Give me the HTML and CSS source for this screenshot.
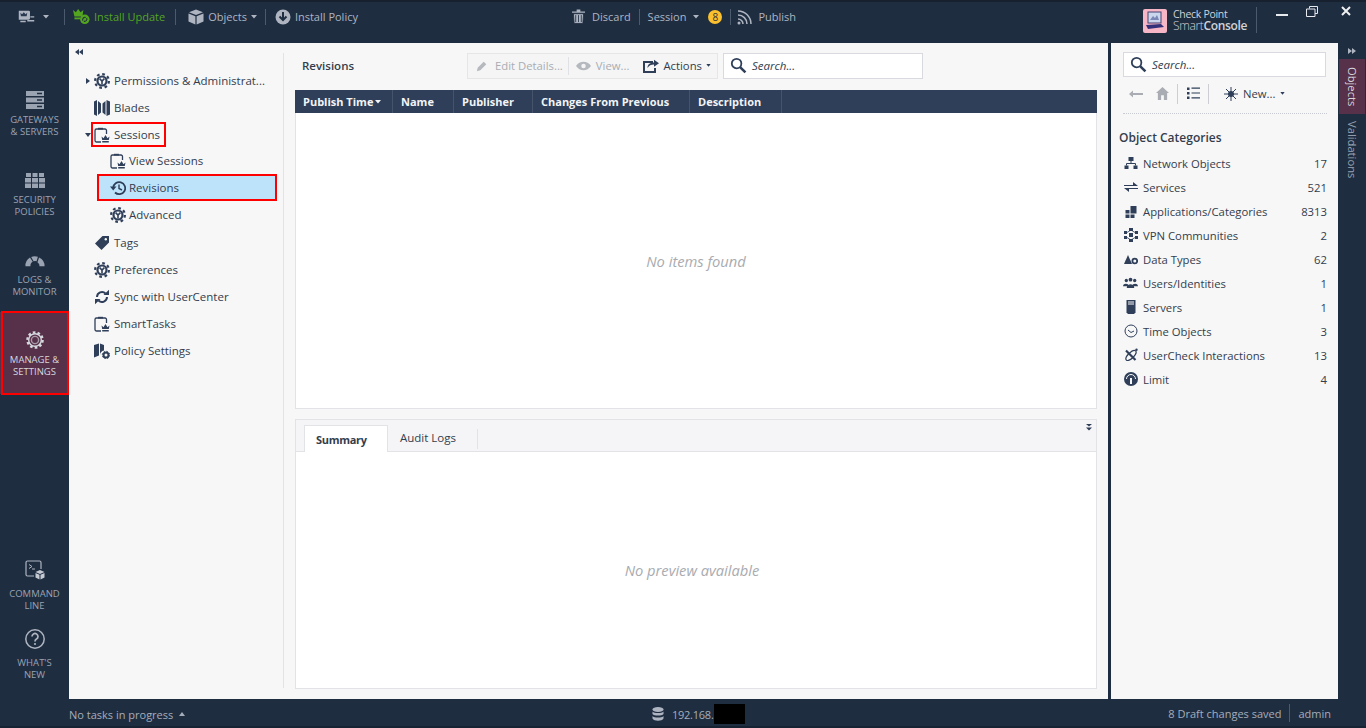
FILE: index.html
```html
<!DOCTYPE html>
<html lang="en">
<head>
<meta charset="utf-8">
<title>SmartConsole</title>
<link rel="stylesheet" href="styles.css">
</head>
<body>
<svg class="defs" width="0" height="0" aria-hidden="true">
  <symbol id="gear" viewBox="0 0 16 16">
    <circle cx="8" cy="8" r="6.9" fill="none" stroke="currentColor" stroke-width="2.2" stroke-dasharray="2.7 2.72"/>
    <circle cx="8" cy="8" r="5.6" fill="currentColor"/>
    <circle cx="8" cy="8" r="3.4" fill="#f7f7f7"/>
    <path d="M5.6 5.6 8 8l2.4-2.4M8 8v3.4" stroke="currentColor" stroke-width="1.6" fill="none"/>
  </symbol>
  <symbol id="crownboard" viewBox="0 0 16 16">
    <path d="M7 15H2.500A1.500 1.500 0 0 1 1 13.500v-10A1.500 1.500 0 0 1 2.500 2H11a1.500 1.500 0 0 1 1.500 1.500V7" fill="none" stroke="currentColor" stroke-width="1.300"/>
    <path d="M4 2.500V.8h5v1.700z" fill="currentColor"/>
    <path d="M7.500 9.500l2 1.700L11.500 8l2 3.200 2-1.700-.7 3.500H8.200zM8.200 14h6.600v1.500H8.200z" fill="currentColor"/>
  </symbol>
  <symbol id="search" viewBox="0 0 16 16">
    <circle cx="6.200" cy="6.200" r="4.500" fill="none" stroke="currentColor" stroke-width="1.700"/>
    <path d="M9.500 9.500l5 5" stroke="currentColor" stroke-width="2.400"/>
  </symbol>
  <symbol id="caret" viewBox="0 0 6 4"><path d="M0 0h6L3 3.500z" fill="currentColor"/></symbol>
</svg>

<div class="app">
  <header class="topbar">
    <div class="top-left">
      <span class="tool menu-tool">
        <svg class="ico-menu" viewBox="0 0 22 18"><path d="M1 1h13a1.500 1.500 0 0 1 1.500 1.500V11a1.500 1.500 0 0 1-1.500 1.500H1z" fill="#aeb5c1"/><path d="M3 3.500l2.300 1.800L7.500 2.800l2.300 2.500 2.200-1.800-.8 4.500H3.800z" fill="#2a3850"/><path d="M16 8h5v1.800h-5zM12 13h9v1.800h-9zM3 14h7v1.800H3z" fill="#aeb5c1"/></svg>
        <svg class="caret-sm" viewBox="0 0 6 4"><use href="#caret"/></svg>
      </span>
      <i class="sep sep-a"></i>
      <span class="tool update">
        <svg class="ico-update" viewBox="0 0 18 18"><path d="M0 2l3 2.500L5.500 1 8 4.500 11 2l-1 7H1.500z" fill="#53a51f"/><path d="M1.500 10H8v2H1.500z" fill="#53a51f"/><circle cx="12.500" cy="12" r="5" fill="#53a51f"/><path d="M10.500 13.500a2.500 2.500 0 0 1 3-3.500M14.500 10.500a2.500 2.500 0 0 1-3 3.500" stroke="#1f2d41" stroke-width="1.100" fill="none"/></svg>
        Install Update
      </span>
      <i class="sep sep-b"></i>
      <span class="tool objects-tool">
        <svg class="ico-top" viewBox="0 0 16 16"><path d="M8 .5l7 2.800L8 6 1 3.300z" fill="#aeb5c1"/><path d="M.5 4.500L7.400 7.200V15.500L.5 12.500zM15.500 4.500L8.600 7.200V15.500l6.900-3z" fill="#aeb5c1"/></svg>
        Objects
        <svg class="caret-sm" viewBox="0 0 6 4"><use href="#caret"/></svg>
      </span>
      <i class="sep sep-c"></i>
      <span class="tool objects-tool">
        <svg class="ico-top" viewBox="0 0 16 16"><circle cx="8" cy="8" r="7.500" fill="#aeb5c1"/><path d="M8 3v8M4.500 7.500L8 11l3.500-3.500" stroke="#1f2d41" stroke-width="2" fill="none"/></svg>
        Install Policy
      </span>
    </div>
    <div class="top-center">
      <span class="tool discard">
        <svg class="ico-trash" viewBox="0 0 14 16"><path d="M0 2.500h14v1.500H0zM5 .5h4v2H5z" fill="#aeb5c1"/><path d="M1.500 5h11l-.8 10.500H2.300zM4 6.500v7.500M7 6.500v7.500M10 6.500v7.500" fill="#aeb5c1" stroke="#1f2d41" stroke-width=".9"/></svg>
        Discard
      </span>
      <i class="sep sep-d"></i>
      <span class="tool session">Session
        <svg class="caret-sm" viewBox="0 0 6 4"><use href="#caret"/></svg>
        <b class="badge">8</b>
      </span>
      <i class="sep sep-e"></i>
      <span class="tool publish">
        <svg class="ico-rss" viewBox="0 0 16 16"><path d="M1 2a13 13 0 0 1 13 13M1 6a9 9 0 0 1 9 9M1 10a5 5 0 0 1 5 5" fill="none" stroke="#aeb5c1" stroke-width="1.500"/><circle cx="2" cy="14" r="1.500" fill="#aeb5c1"/></svg>
        Publish
      </span>
    </div>
    <div class="top-right">
      <div class="logo">
        <svg class="logo-ico" viewBox="0 0 24 24"><rect width="24" height="24" rx="2" fill="#f7b6c6"/><rect x="5" y="3" width="13" height="11" fill="#c9d6ec" stroke="#46406f"/><path d="M7 11l3-4 2 2 2-3 2 5z" fill="#7a86b5"/><path d="M3 16l15-1 3 3-16 2z" fill="#33307a"/></svg>
        <div class="logo-text">
          <span class="logo-l1">Check Point</span>
          <span class="logo-l2">Smart<b>Console</b></span>
        </div>
      </div>
      <i class="logo-sep"></i>
      <div class="winctl">
        <svg class="win-min" viewBox="0 0 12 2"><path d="M0 0h12v2H0z" fill="#e6e9ee"/></svg>
        <svg class="win-max" viewBox="0 0 12 11"><path d="M3.500 2.500V.5h8v7h-2.500M.5 3h8.500v7.500H.5z" fill="none" stroke="#e6e9ee"/></svg>
        <svg class="win-close" viewBox="0 0 10 10"><path d="M1 1l8 8M9 1l-8 8" stroke="#eef0f3" stroke-width="2"/></svg>
      </div>
    </div>
  </header>

  <div class="middle">
    <nav class="sidenav">
      <div class="nav-main">
        <a class="nav-item">
          <svg class="nav-ico" viewBox="0 0 20 20"><path d="M1 1h18v5H1zM1 7.500h18v5H1zM1 14h18v5H1z" fill="#9aa3b2"/><path d="M12 3.500h5M12 10h5M12 16.500h5" stroke="#1f2d41" stroke-width="1.400"/></svg>
          <span>GATEWAYS<br>&amp; SERVERS</span>
        </a>
        <a class="nav-item">
          <svg class="nav-ico" viewBox="0 0 20 18"><path d="M1 2h5v4H1zM7.500 2h5v4h-5zM14 2h5v4h-5zM0 7h6v4.500H0zM7 7h6v4.500H7zM14 7h6v4.500h-6zM0 12.500h6V17H0zM7 12.500h6V17H7zM14 12.500h6V17h-6z" fill="#9aa3b2"/></svg>
          <span>SECURITY<br>POLICIES</span>
        </a>
        <a class="nav-item">
          <svg class="nav-ico" viewBox="0 0 22 14"><path d="M.5 14A10.500 10.500 0 0 1 5.500 4.300L8.500 9A5 5 0 0 0 6 14zM6.800 3.600a10.500 10.500 0 0 1 7.400-.1L12.700 8.400a5 5 0 0 0-3.300.1zM15.500 4.200A10.500 10.500 0 0 1 21.500 14H16a5 5 0 0 0-2.300-4.600z" fill="#9aa3b2"/></svg>
          <span>LOGS &amp;<br>MONITOR</span>
        </a>
        <a class="nav-item active">
          <svg class="nav-ico" viewBox="0 0 20 20"><circle cx="10" cy="10" r="7.600" fill="none" stroke="#d5d8de" stroke-width="2.400" stroke-dasharray="2.600 2.170"/><circle cx="10" cy="10" r="6.300" fill="none" stroke="#d5d8de" stroke-width="1.400"/><circle cx="10" cy="10" r="3.600" fill="none" stroke="#a99aa8" stroke-width="1.400"/></svg>
          <span>MANAGE &amp;<br>SETTINGS</span>
        </a>
      </div>
      <div class="nav-bottom">
        <a class="nav-item small">
          <svg class="nav-ico-cl" viewBox="0 0 20 20"><path d="M9 16H2.500A1.500 1.500 0 0 1 1 14.500v-12A1.500 1.500 0 0 1 2.500 1h12A1.500 1.500 0 0 1 16 2.500V9" fill="none" stroke="#aeb5c1" stroke-width="1.200"/><path d="M4 4.500L7 6.500 4 8.500M7 9h3" stroke="#aeb5c1" stroke-width="1" fill="none"/><path d="M15 10l4.500 2-4.500 2-4.500-2zM10.500 13l4 1.800V19.500l-4-2zM19.500 13l-4 1.800V19.500l4-2z" fill="#c4c9d2"/></svg>
          <span>COMMAND<br>LINE</span>
        </a>
        <a class="nav-item small">
          <svg class="nav-ico-cl" viewBox="0 0 20 20"><circle cx="10" cy="10" r="9.200" fill="none" stroke="#aeb5c1" stroke-width="1.500"/><path d="M7 7.500a3 3 0 1 1 4.500 2.600C10.500 10.700 10 11.300 10 12.500" fill="none" stroke="#aeb5c1" stroke-width="1.700"/><circle cx="10" cy="15" r="1.100" fill="#aeb5c1"/></svg>
          <span>WHAT'S<br>NEW</span>
        </a>
      </div>
      <i class="mark mark-nav"></i>
    </nav>

    <section class="tree-pane">
      <div class="collapse-l"><svg viewBox="0 0 8 6"><path d="M4 0v6L0 3zM8 0v6L4 3z" fill="#2f3f59"/></svg></div>
      <ul class="tree">
        <li class="row"><svg class="twist" viewBox="0 0 4 6"><path d="M0 0l4 3-4 3z"/></svg><svg class="ti"><use href="#gear"/></svg>Permissions &amp; Administrat...</li>
        <li class="row"><svg class="ti" viewBox="0 0 16 16"><path d="M0 1.500L3 0v16l-3-1.500zM4 1l3 2.500v9L4 15zM8.500 3.500L11.500 1v14l-3-2.500zM12.500 0L16 1.500v13L12.500 16z" fill="currentColor"/></svg>Blades</li>
        <li class="row open"><svg class="twist" viewBox="0 0 6 4"><path d="M0 0h6L3 4z"/></svg><svg class="ti"><use href="#crownboard"/></svg>Sessions<i class="mark mark-sessions"></i></li>
        <li class="row sub short"><svg class="ti"><use href="#crownboard"/></svg>View Sessions</li>
        <li class="row sub selected"><svg class="ti" viewBox="0 0 16 16"><path d="M3.200 8A6 6 0 1 1 5 12.500" fill="none" stroke="currentColor" stroke-width="1.800"/><path d="M0 6.500h6.500L3.200 10.500z" fill="currentColor"/><path d="M9 4.500V8.500l3 1.500" fill="none" stroke="currentColor" stroke-width="1.400"/></svg>Revisions<i class="mark mark-revisions"></i></li>
        <li class="row sub"><svg class="ti"><use href="#gear"/></svg>Advanced</li>
        <li class="row gap1"><svg class="ti" viewBox="0 0 16 16"><path d="M8.500 1h6.500v6.500L7.500 15 1 8.500z" fill="currentColor"/><circle cx="11.800" cy="4.200" r="1.200" fill="#f7f7f7"/></svg>Tags</li>
        <li class="row"><svg class="ti"><use href="#gear"/></svg>Preferences</li>
        <li class="row"><svg class="ti" viewBox="0 0 16 16"><path d="M3 8a5 5 0 0 1 8.500-3.500M13 8a5 5 0 0 1-8.500 3.500" fill="none" stroke="currentColor" stroke-width="2"/><path d="M9.500 6H15V.8zM6.500 10H1v5.200z" fill="currentColor"/></svg>Sync with UserCenter</li>
        <li class="row"><svg class="ti"><use href="#crownboard"/></svg>SmartTasks</li>
        <li class="row"><svg class="ti" viewBox="0 0 16 16"><path d="M0 2l5-1.500v12L0 14.500zM6 .5l4 1.500v5.500a4.500 4.500 0 0 0-4 5z" fill="currentColor"/><circle cx="12" cy="12" r="2.500" fill="none" stroke="currentColor" stroke-width="2"/><circle cx="12" cy="12" r="3.700" fill="none" stroke="currentColor" stroke-width="1" stroke-dasharray="1.500 1.400"/></svg>Policy Settings</li>
      </ul>
    </section>

    <main class="content">
      <div class="content-tools">
        <strong class="content-title">Revisions</strong>
        <div class="actions">
          <span class="act dis"><svg class="act-ico" viewBox="0 0 14 14"><path d="M1 13l1-4 7-7 3 3-7 7z" fill="#b5b8bd"/></svg>Edit Details...</span>
          <i class="act-sep"></i>
          <span class="act dis view"><svg class="eye" viewBox="0 0 16 10"><path d="M0 5c4-6 12-6 16 0-4 6-12 6-16 0z" fill="#b5b8bd"/><circle cx="8" cy="5" r="2.400" fill="#f5f5f7"/></svg>View...</span>
          <span class="act on"><svg class="share" viewBox="0 0 16 14"><path d="M10 3H1v10h11V9" fill="none" stroke="#2f3f59" stroke-width="2"/><path d="M4.500 9c0-4 3-5.500 6.500-5.500V.8L16 4.300l-5 3.500V5.500c-3 0-5 1-6.500 3.500z" fill="#2f3f59"/></svg>Actions<svg class="caret-xs" viewBox="0 0 6 4"><use href="#caret"/></svg></span>
        </div>
        <label class="searchbox wide"><svg class="si"><use href="#search"/></svg><em>Search...</em></label>
      </div>
      <div class="table-card">
        <div class="thead">
          <span class="th c1">Publish Time<svg class="caret-th" viewBox="0 0 6 4"><use href="#caret"/></svg></span>
          <span class="th c2">Name</span>
          <span class="th c3">Publisher</span>
          <span class="th c4">Changes From Previous</span>
          <span class="th c5">Description</span>
        </div>
        <div class="empty">No items found</div>
      </div>
      <div class="detail-card">
        <div class="tabs">
          <span class="tab current">Summary</span>
          <span class="tab">Audit Logs</span>
          <svg class="more" viewBox="0 0 6 7"><path d="M0 0h6L3 2.500zM0 3.500h6L3 6.500z" fill="#2f3f59"/></svg>
        </div>
        <div class="empty e2">No preview available</div>
      </div>
    </main>

    <aside class="objects">
      <label class="searchbox side"><svg class="si"><use href="#search"/></svg><em>Search...</em></label>
      <div class="obj-tools">
        <svg class="o-back" viewBox="0 0 14 8"><path d="M0 4l4-3.500V3h10v2H4v2.500z" fill="#a9adb3"/></svg>
        <svg class="o-home" viewBox="0 0 14 14"><path d="M7 0l7 6.500h-2V14H8.500V9h-3v5H2V6.500H0z" fill="#a9adb3"/></svg>
        <i class="o-sep"></i>
        <svg class="o-list" viewBox="0 0 13 13"><path d="M0 .5h2.500V3H0zM0 5h2.500v2.500H0zM0 9.500h2.500V12H0z" fill="#2f3f59"/><path d="M4.500 1.200H13M4.500 6H13M4.500 10.800H13" stroke="#2f3f59" stroke-width="1.200"/></svg>
        <i class="o-sep o-sep2"></i>
        <span class="o-new"><svg class="o-star" viewBox="0 0 14 14"><path d="M7 0v14M0 7h14M2 2l10 10M12 2L2 12" stroke="#2f3f59" stroke-width="1"/><circle cx="7" cy="7" r="3" fill="#2f3f59"/></svg>New...<svg class="caret-xs" viewBox="0 0 6 4"><use href="#caret"/></svg></span>
      </div>
      <h2 class="cat-title">Object Categories</h2>
      <ul class="cats">
        <li><svg class="ci" viewBox="0 0 14 14"><path d="M4.500 1h5v4h-5zM.5 9.500h4v3.500h-4zM9.500 9.500h4v3.500h-4z" fill="currentColor"/><path d="M7 5v2.500M2.500 9.500v-2h9v2" stroke="currentColor" fill="none"/></svg><span>Network Objects</span><b>17</b></li>
        <li><svg class="ci" viewBox="0 0 14 14"><path d="M0 6h14L9 2v3H0zM14 8H0l5 4V9h9z" fill="currentColor"/></svg><span>Services</span><b>521</b></li>
        <li><svg class="ci" viewBox="0 0 14 14"><path d="M1.500 6h4v3.500h-4zM1.500 10.500h4V14h-4zM6.500 10.500h4V14h-4zM6.500 2h6v7.500h-6z" fill="currentColor"/></svg><span>Applications/Categories</span><b>8313</b></li>
        <li><svg class="ci" viewBox="0 0 14 14"><path d="M5 0h4v3H5zM0 3h3v3H0zM11 3h3v3h-3zM5 5h4v4H5zM0 8h3v3H0zM11 8h3v3h-3zM5 11h4v3H5z" fill="currentColor"/><path d="M3 4.500L7 2l4 2.500M3 9.500L7 12l4-2.500" stroke="currentColor" fill="none" stroke-width=".8"/></svg><span>VPN Communities</span><b>2</b></li>
        <li><svg class="ci" viewBox="0 0 14 14"><path d="M4 3l4 9H0z" fill="currentColor"/><circle cx="10.800" cy="9" r="2.400" fill="none" stroke="currentColor" stroke-width="1.800"/></svg><span>Data Types</span><b>62</b></li>
        <li><svg class="ci ci-users" viewBox="0 0 18 14"><circle cx="4" cy="4" r="2" fill="currentColor"/><circle cx="9" cy="3" r="2.300" fill="currentColor"/><circle cx="14" cy="4" r="2" fill="currentColor"/><path d="M0 11c0-4 7-4 7 0zM4.500 13c0-6 9-6 9 0zM11 11c0-4 7-4 7 0z" fill="currentColor"/></svg><span>Users/Identities</span><b>1</b></li>
        <li><svg class="ci" viewBox="0 0 14 14"><path d="M2.500 0h9v13h-1v1h-7v-1h-1z" fill="currentColor"/><path d="M4 2h6M4 4h6" stroke="#f7f7f7"/></svg><span>Servers</span><b>1</b></li>
        <li class="time"><svg class="ci" viewBox="0 0 14 14"><circle cx="7" cy="7" r="6" fill="none" stroke="currentColor"/><path d="M4 6l3 2.500 3-1.500" fill="none" stroke="currentColor"/></svg><span>Time Objects</span><b>3</b></li>
        <li><svg class="ci" viewBox="0 0 14 14"><ellipse cx="7" cy="7.500" rx="6.500" ry="2.800" transform="rotate(-45 7 7.500)" fill="none" stroke="currentColor" stroke-width="1.200"/><path d="M2 2.500L11.500 12" stroke="currentColor" stroke-width="2.200"/><circle cx="12.500" cy="1.800" r="1.200" fill="currentColor"/></svg><span>UserCheck Interactions</span><b>13</b></li>
        <li><svg class="ci" viewBox="0 0 14 14"><circle cx="7" cy="7" r="7" fill="currentColor"/><path d="M2.500 7a4.500 4.500 0 0 1 9 0" fill="none" stroke="#f7f7f7"/><path d="M6 6h2v6H6z" fill="#f7f7f7"/></svg><span>Limit</span><b>4</b></li>
      </ul>
    </aside>

    <div class="rail">
      <svg class="rail-arrows" viewBox="0 0 8 6"><path d="M0 0v6l4-3zM4 0v6l4-3z" fill="#aeb5c1"/></svg>
      <span class="rail-tab on">Objects</span>
      <span class="rail-tab">Validations</span>
    </div>
  </div>

  <footer class="status">
    <span class="tasks">No tasks in progress<svg class="caret-up" viewBox="0 0 6 4"><path d="M0 4h6L3 0z" fill="currentColor"/></svg></span>
    <span class="server">
      <svg class="db" viewBox="0 0 12 14"><ellipse cx="6" cy="2.500" rx="5.500" ry="2.500" fill="#aeb5c1"/><path d="M.5 4.500C2 6.500 10 6.500 11.500 4.500V7C10 9 2 9 .5 7zM.5 9C2 11 10 11 11.500 9v2.500C10 14.500 2 14.500 .5 11.500z" fill="#aeb5c1"/></svg>
      <span class="ip">192.168.</span><i class="redact"></i>
    </span>
    <span class="session-info">8 Draft changes saved<i class="status-sep"></i>admin</span>
  </footer>
</div>
</body>
</html>
```

FILE: styles.css
```css
* { box-sizing: border-box; }
html, body { margin: 0; height: 100%; }
body { font-family: "Open Sans", "Noto Sans", "Liberation Sans", sans-serif; font-size: 11.5px; color: #333d4d; background: #1f2d41; overflow: hidden; }
.defs { position: absolute; }
ul { list-style: none; margin: 0; padding: 0; }
svg { display: block; flex: none; }
i { display: block; }

.app { width: 1366px; height: 728px; display: flex; flex-direction: column; border-top: 2px solid #16202f; border-bottom: 2px solid #172233; }

/* top bar */
.topbar { height: 41px; flex: none; display: flex; align-items: flex-start; color: #aeb5c1; font-size: 11px; }
.top-left { width: 560px; flex: none; display: flex; align-items: center; height: 29px; padding-left: 18px; }
.top-center { width: 583px; flex: none; display: flex; align-items: center; height: 29px; padding-left: 12px; }
.top-right { flex: 1; display: flex; align-items: flex-start; padding-top: 5px; }
.tool { display: flex; align-items: center; gap: 4px; white-space: nowrap; }
.sep { width: 1px; height: 16px; background: #4c5a6e; }
.sep-a { margin: 0 8px 0 15px; }
.sep-b { margin: 0 12px 0 10px; }
.sep-c { margin: 0 9px 0 8px; }
.sep-d { margin: 0 8px; }
.sep-e { margin: 0 0 0 8px; }
.menu-tool { gap: 8px; }
.ico-menu { width: 17px; height: 14px; }
.caret-sm { width: 6px; height: 4px; color: #aeb5c1; }
.update { color: #53a51f; }
.ico-update { width: 17px; height: 17px; }
.ico-top { width: 16px; height: 16px; }
.discard { gap: 7px; }
.ico-trash { width: 13px; height: 15px; }
.publish { gap: 5px; }
.ico-rss { width: 16px; height: 16px; margin-left: 6px; }
.session { gap: 7px; }
.badge { width: 14px; height: 14px; border-radius: 50%; background: #fbc02d; color: #333; font-weight: 400; font-size: 10px; text-align: center; line-height: 14px; margin-left: 2px; }
.logo { display: flex; gap: 6px; margin-top: 2px; }
.logo-ico { width: 24px; height: 24px; }
.logo-text { display: flex; flex-direction: column; color: #cfd3da; }
.logo-l1 { display: block; height: 11px; line-height: 11px; font-size: 10.5px; letter-spacing: -.3px; }
.logo-l2 { display: block; height: 12px; line-height: 12px; font-size: 12px; letter-spacing: -.35px; font-weight: 300; }
.logo-l2 b { font-weight: 600; }
.logo-sep { width: 1px; height: 26px; background: #4c5a6e; margin-left: 9px; }
.winctl { display: flex; align-items: flex-start; padding-left: 19px; }
.win-min { width: 12px; height: 2px; margin-top: 7px; }
.win-max { width: 12px; height: 11px; margin: -1px 0 0 18px; }
.win-close { width: 10px; height: 10px; margin: -1px 0 0 23px; }

/* middle */
.middle { flex: 1; min-height: 0; display: flex; }

.sidenav { width: 69px; flex: none; display: flex; flex-direction: column; justify-content: space-between; padding: 29px 0 1px; position: relative; color: #9aa3b2; font-size: 9.5px; line-height: 12px; text-align: center; }
.nav-main { display: flex; flex-direction: column; }
.nav-item { height: 80px; display: flex; flex-direction: column; align-items: center; padding-top: 18px; }
.nav-item span { display: block; margin-top: 4px; white-space: nowrap; }
.nav-ico { width: 20px; height: 20px; }
.nav-item.active { background: #57304a; color: #d5d8de; height: 82px; }
.nav-bottom { display: flex; flex-direction: column; }
.nav-item.small { height: 69px; padding-top: 0; }
.nav-ico-cl { width: 20px; height: 20px; }
.nav-item.small span { margin-top: 8px; }
.mark { position: absolute; border: 2px solid #f00; pointer-events: none; }
.mark-nav { left: 1px; top: 268px; width: 68px; height: 84px; }

.tree-pane { width: 215px; flex: none; background: #f7f7f7; position: relative; }
.tree-pane::after { content: ""; position: absolute; right: 0; top: 10px; bottom: 11px; width: 1px; background: #e2e3e7; }
.collapse-l { padding: 6px 0 0 6px; height: 24px; }
.collapse-l svg { width: 8px; height: 6px; }
.row { height: 27px; display: flex; align-items: center; padding-left: 25px; position: relative; white-space: nowrap; }
.row.sub { padding-left: 41px; }
.row.short { margin-top: -1px; }
.row.gap1 { height: 28px; padding-top: 1px; }
.ti { width: 16px; height: 16px; margin-right: 4px; color: #2f3f59; }
.sub .ti { margin-right: 3px; }
.twist { position: absolute; left: 17px; top: 11px; width: 4px; height: 6px; fill: #2f3f59; }
.open .twist { left: 16px; top: 12px; width: 6px; height: 4px; }
.selected { isolation: isolate; }
.selected::before { content: ""; position: absolute; left: 30px; right: 8px; top: 0; bottom: 0; background: #bde3fb; z-index: -1; }
.mark-sessions { left: 22px; top: 1px; width: 75px; height: 25px; }
.mark-revisions { left: 28px; top: 0; width: 180px; height: 27px; }

.content { flex: 1; min-width: 0; background: #f7f7f7; padding: 10px 11px 10px 11px; display: flex; flex-direction: column; border-right: 3px solid #1f2d41; }
.content-tools { height: 26px; display: flex; align-items: center; flex: none; }
.content-title { width: 172px; flex: none; padding: 0 0 2px 7px; font-weight: 600; font-size: 11.5px; color: #333d4d; }
.actions { width: 251px; flex: none; height: 26px; display: flex; align-items: center; border: 1px solid #e6e6e9; padding: 0 0 1px 8px; background: #f5f5f6; font-size: 11.3px; }
.act { display: flex; align-items: center; white-space: nowrap; }
.dis { color: #a9adb3; }
.act-ico { width: 12px; height: 12px; margin-right: 7px; }
.act-sep { width: 1px; height: 18px; background: #e0e1e5; margin: 0 7px 0 5px; }
.eye { width: 15px; height: 10px; margin-right: 5px; }
.on { color: #333d4d; margin-left: 14px; }
.share { width: 16px; height: 14px; margin-right: 4px; }
.caret-xs { width: 5px; height: 3px; margin-left: 4px; color: #2f3f59; }
.searchbox { display: flex; align-items: center; background: #fff; border: 1px solid #d8dae0; color: #2f3f59; }
.searchbox em { color: #333d4d; font-size: 11.5px; }
.si { width: 17px; height: 17px; margin: 0 5px 0 6px; }
.wide { width: 200px; flex: none; height: 26px; margin-left: 5px; padding-bottom: 1px; }
.table-card { margin-top: 11px; height: 319px; flex: none; background: #fff; border: 1px solid #e2e3e7; border-top: 0; display: flex; flex-direction: column; }
.thead { height: 23px; flex: none; display: flex; margin: 0 -1px; background: #2f3f59; color: #f2f4f7; font-weight: 700; font-size: 11px; }
.th { border-right: 1px solid #46546b; padding-left: 8px; line-height: 23px; white-space: nowrap; display: flex; align-items: center; }
.c1 { width: 98px; } .c2 { width: 61px; } .c3 { width: 79px; } .c4 { width: 157px; } .c5 { width: 92px; }
.caret-th { width: 6px; height: 4px; margin-left: 2px; color: #f2f4f7; }
.empty { flex: 1; display: flex; align-items: center; justify-content: center; font-style: italic; color: #a8abb0; font-size: 14.7px; }
.detail-card { margin-top: 10px; flex: 1; min-height: 0; background: #fff; border: 1px solid #e2e3e7; display: flex; flex-direction: column; }
.tabs { height: 32px; flex: none; background: #f5f5f7; border-bottom: 1px solid #e2e3e7; padding: 5px 0 0 8px; display: flex; align-items: flex-start; position: relative; }
.tab { height: 27px; white-space: nowrap; }
.tab:nth-child(2) { padding: 0 21px 0 12px; margin-top: 4px; height: 20px; line-height: 17px; border-right: 1px solid #e2e3e7; }
.current { width: 84px; height: 27px; background: #fff; border: 1px solid #e2e3e7; border-bottom: 0; font-weight: 700; font-size: 11px; letter-spacing: -.3px; padding-left: 11px; line-height: 28px; color: #333d4d; }
.more { position: absolute; right: 4px; top: 4px; width: 6px; height: 7px; }
.e2 { padding: 0 8px 1px 0; }

.objects { width: 227px; flex: none; background: #f7f7f7; padding: 9px 11px 0 8px; display: flex; flex-direction: column; font-size: 11.3px; }
.side { width: 203px; height: 25px; margin-left: 4px; flex: none; }
.obj-tools { height: 37px; flex: none; margin-left: 4px; display: flex; align-items: center; border-bottom: 1px dotted #c8cbd0; padding: 3px 0 6px 6px; }
.o-back { width: 14px; height: 8px; margin-right: 13px; }
.o-home { width: 13px; height: 13px; }
.o-sep { width: 1px; height: 20px; background: #ccced3; margin: 0 9px 0 8px; }
.o-sep2 { margin: 0 15px 0 8px; }
.o-list { width: 13px; height: 13px; }
.o-new { display: flex; align-items: center; }
.o-star { width: 14px; height: 14px; margin-right: 5px; }
.cat-title { margin: 16px 0 5px; font-size: 12px; font-weight: 600; color: #333d4d; line-height: 16px; }
.cats li { height: 24px; display: flex; align-items: center; padding-left: 5px; }
.ci { width: 14px; height: 14px; margin-right: 5px; color: #2f3f59; }
.ci-users { margin-left: -1px; margin-right: 5px; width: 15px; }
.cats span { flex: 1; }
.cats b { font-weight: 400; }

.rail { width: 28px; flex: none; padding-top: 5px; display: flex; flex-direction: column; align-items: flex-start; color: #9aa3b2; }
.rail-arrows { width: 8px; height: 6px; margin: 0 0 5px 10px; }
.rail-tab { writing-mode: vertical-rl; width: 26px; margin-left: 1px; display: flex; align-items: center; justify-content: center; font-size: 11.2px; white-space: nowrap; }
.rail-tab.on { background: #57304a; color: #d8d5da; height: 55px; }
.rail-tab:not(.on) { height: 56px; margin-top: 8px; }

/* status */
.status { height: 27px; flex: none; display: flex; align-items: center; color: #a5adba; font-size: 11px; padding: 3px 0 0 69px; }
.tasks { display: flex; align-items: center; width: 583px; flex: none; }
.caret-up { width: 6px; height: 4px; margin-left: 6px; }
.server { display: flex; align-items: center; flex: 1; }
.db { width: 12px; height: 14px; margin-right: 8px; }
.ip { letter-spacing: -.25px; }
.redact { width: 31px; height: 20px; background: #000; margin-top: -1px; }
.session-info { display: flex; align-items: center; padding-right: 35px; margin-top: -2px; }
.status-sep { width: 1px; height: 18px; background: #4c5a6e; margin: 0 8px; }
```
